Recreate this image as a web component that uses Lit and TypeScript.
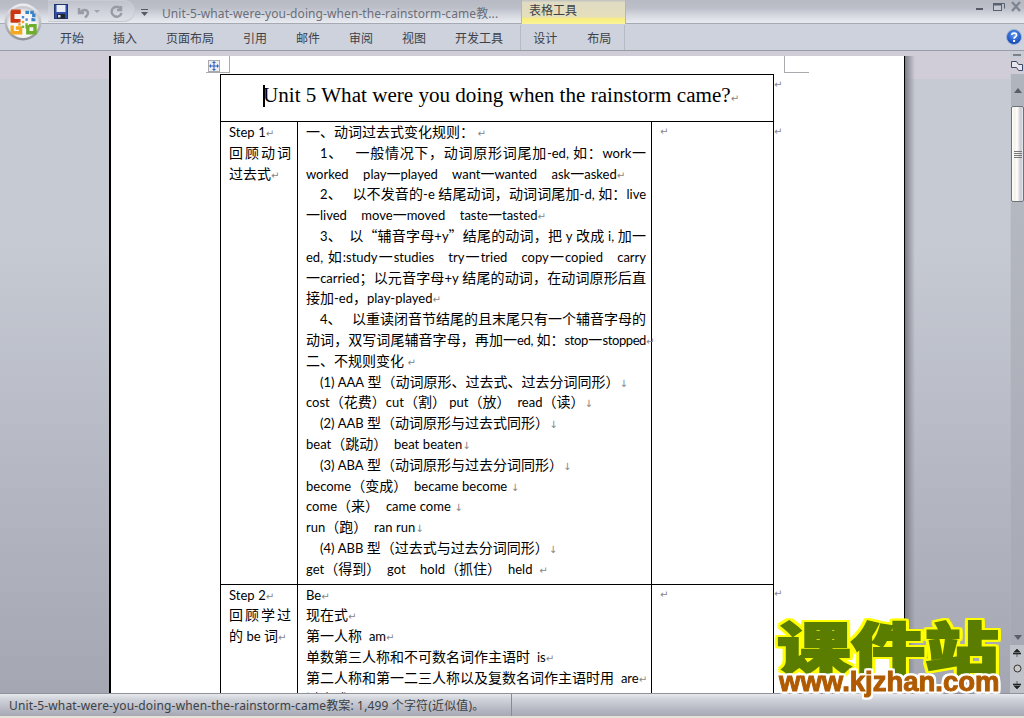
import { LitElement, html, css, svg } from "lit";
import { customElement } from "lit/decorators.js";

type Line = { t: string; j?: boolean; i?: boolean; h?: boolean; k?: boolean };

const col1a: Line[] = [{ t: "Step 1↵" }, { t: "回顾动词", j: true }, { t: "过去式↵" }];
const col1b: Line[] = [{ t: "Step 2↵" }, { t: "回顾学过", j: true }, { t: "的 be 词↵" }];

const body1: Line[] = [
  { t: "一、动词过去式变化规则： ↵" },
  { t: "1、   一般情况下，动词原形词尾加-ed, 如：work一", j: true, i: true },
  { t: "worked    play一played    want一wanted    ask一asked↵" },
  { t: "2、   以不发音的-e 结尾动词，动词词尾加-d, 如：live", j: true, i: true },
  { t: "一lived    move一moved    taste一tasted↵" },
  { t: "3、  以“辅音字母+y”结尾的动词，把 y 改成 i, 加一", j: true, i: true },
  { t: "ed, 如:study一studies   try一tried   copy一copied   carry", j: true },
  { t: "一carried；以元音字母+y 结尾的动词，在动词原形后直", j: true },
  { t: "接加-ed，play-played↵" },
  { t: "4、   以重读闭音节结尾的且末尾只有一个辅音字母的", j: true, i: true },
  { t: "动词，双写词尾辅音字母，再加一ed, 如：stop一stopped↵", j: true, h: true, k: true },
  { t: "二、不规则变化 ↵" },
  { t: "(1) AAA 型（动词原形、过去式、过去分词同形）↓", i: true },
  { t: "cost（花费）cut（割） put（放）  read（读）↓" },
  { t: "(2) AAB 型（动词原形与过去式同形）↓", i: true },
  { t: "beat（跳动）  beat beaten↓" },
  { t: "(3) ABA 型（动词原形与过去分词同形）↓", i: true },
  { t: "become（变成）  became become ↓" },
  { t: "come（来）  came come ↓" },
  { t: "run（跑）  ran run↓" },
  { t: "(4) ABB 型（过去式与过去分词同形）↓", i: true },
  { t: "get（得到）  got    hold（抓住）  held  ↵" },
];

const body2: Line[] = [
  { t: "Be↵" },
  { t: "现在式↵" },
  { t: "第一人称  am↵" },
  { t: "单数第三人称和不可数名词作主语时  is↵" },
  { t: "第二人称和第一二三人称以及复数名词作主语时用  are↵", h: true },
  { t: "过去式↵" },
];

const tabs = ["开始", "插入", "页面布局", "引用", "邮件", "审阅", "视图", "开发工具"];

function rich(s: string) {
  const parts = s.match(/[\x21-\x7e]+(?: +[\x21-\x7e]+)*|[↵↓]|[^\x21-\x7e↵↓]+/g) || [];
  return parts.map((p) => {
    if (p === "↵" || p === "↓") return html`<span class="pm">${p}</span>`;
    if (/^[\x21-\x7e]/.test(p)) return html`<span class="lat">${p}</span>`;
    return p;
  });
}

function lines(ls: Line[]) {
  return ls.map(
    (l) => html`<div class="ln ${l.j ? "j" : ""} ${l.i ? "ind" : ""} ${l.h ? "hang" : ""} ${l.k ? "tight" : ""}">${rich(l.t)}</div>`
  );
}

const orb = svg`
  <defs>
    <radialGradient id="ob" cx="50%" cy="60%" r="55%">
      <stop offset="0" stop-color="#ffffff"/><stop offset="0.75" stop-color="#f2f2f2"/><stop offset="1" stop-color="#c9cbd0"/>
    </radialGradient>
    <linearGradient id="ring" x1="0" y1="0" x2="0" y2="1">
      <stop offset="0" stop-color="#eef0f4"/><stop offset="1" stop-color="#8d9097"/>
    </linearGradient>
  </defs>
  <circle cx="20" cy="20" r="18.5" fill="url(#ring)"/>
  <circle cx="20" cy="20" r="16" fill="url(#ob)"/>
  <g transform="translate(20 20) scale(1.2) translate(-20 -20)">
    <g fill="none" stroke-width="2.8">
      <path d="M18 11H11.5v8H18" stroke="#d2421c"/>
      <path d="M18 12H11v7h5" stroke="#c9360f"/>
      <path d="M22 12h7v6h-3" stroke="#3a82c8" stroke-dasharray="3 1"/>
      <path d="M11 23v6h7v-4h-4" stroke="#f4a81c"/>
      <path d="M22 24h2v5h6v-6h-5" stroke="#6fae2c"/>
    </g>
    <g fill="#e8a030"><rect x="19" y="19" width="2" height="2"/><rect x="16" y="21" width="2" height="2"/></g>
    <g fill="#4a8cd0"><rect x="22" y="17" width="2" height="2"/><rect x="19" y="15" width="2" height="2"/></g>
    <g fill="#7ab83a"><rect x="22" y="21" width="2" height="2"/><rect x="19" y="23" width="2" height="2"/></g>
  </g>
`;

@customElement("app-root")
export class AppRoot extends LitElement {
  static styles = css`
    :host { display: block; width: 1024px; height: 718px; position: relative; overflow: hidden;
      font-family: "Noto Sans", "Noto Sans CJK SC", sans-serif; background: #e6e4d8; }
    .win { display: flex; flex-direction: column; height: 716px; }

    .title { height: 24px; flex: none; display: flex; align-items: center; box-sizing: border-box;
      background: linear-gradient(#b7bac3 0, #bcbfc8 35%, #d8dae2 70%, #e9ebf1 100%);
      border-bottom: 1px solid #a6aab2; padding-left: 48px; position: relative; }
    .qat { width: 87px; height: 22px; flex: none; box-sizing: border-box; display: flex; align-items: center; gap: 0;
      padding: 2px 0 0 6px; border: 1px solid #c8cbd3; border-left: none; border-radius: 0 12px 12px 0;
      background: linear-gradient(#bfc2cb, #dde0e7); margin-top: -2px; }
    .qat svg { display: block; flex: none; }
    .cust { flex: none; margin: 2px 0 0 6px; display: block; }
    .doc-title { flex: none; width: 352px; margin-left: 14px; font-size: 12px; color: #6a6e78; white-space: nowrap;
      margin-top: 3px; letter-spacing: 0.09px; }
    .ctx-h { flex: none; width: 105px; height: 24px; box-sizing: border-box; margin-left: 7px; padding: 3px 0 0 7px;
      font-size: 12px; line-height: 15px; color: #3c3f46;
      background: linear-gradient(#bfc0c2 0, #dfdbc2 10%, #e6dfbc 70%, #f9ee7c 78%, #fbf49a 100%);
      border-left: 1px solid #b4b6bd; border-right: 1px solid #b4b6bd; }
    .ctl { margin-left: auto; display: flex; align-items: center; padding-right: 1px; margin-top: -9px; }
    .ctl svg { display: block; }

    .ribbon { height: 27px; flex: none; box-sizing: border-box; background: #ced2dc; border-bottom: 1px solid #989ca4;
      display: flex; align-items: center; padding: 1px 0 0 60px; gap: 29px; font-size: 12px; color: #3d4149; position: relative; }
    .ctx-tabs { display: flex; gap: 30px; padding: 0 13px 0 12px; height: 25px; align-items: center;
      border-left: 1px solid #b6bac3; border-right: 1px solid #b6bac3; margin-left: -12px; }
    .help { position: absolute; right: 2px; top: 5px; display: block; }

    .doc { flex: 1; min-height: 0; display: flex; }
    .canvas { flex: 1; min-width: 0; display: flex; flex-direction: column;
      background: linear-gradient(#d0cdd8 0, #d0cdd8 28px, #c6cad3 28px, #c6cad3 30%, #a4a7b2 100%); }
    .strip { height: 5px; flex: none; }
    .row { flex: 1; min-height: 0; display: flex; }
    .page { width: 796px; margin-left: 109px; box-sizing: border-box; flex: none; background: #fff; overflow: hidden;
      border-left: 2px solid #000; border-right: 1px solid #000; padding: 18px 0 0 109px; position: relative; }
    .shade { width: 10px; flex: none; background: linear-gradient(90deg, #7b7d85, rgba(150,152,160,0)); }

    table { border-collapse: collapse; table-layout: fixed; width: 570px; }
    td { border: 1px solid #000; vertical-align: top; padding: 0; }
    td.end { border: none; padding: 0; }
    .head { height: 47px; text-align: center; vertical-align: middle; font-family: "Liberation Serif", serif; font-size: 21.1px;
      color: #000; white-space: nowrap; padding: 0 0 5px 8px; box-sizing: border-box; }
    .caret { display: inline-block; width: 2px; height: 22px; background: #000; vertical-align: -5px; margin-right: -2px; }
    .cell1 { padding: 0 6px 5px 8px; box-sizing: border-box; }
    .cell2 { padding: 0 5px 5px 8px; box-sizing: border-box; }
    .ln { font-size: 14px; line-height: 20.8px; height: 20.8px; color: #000; white-space: pre-wrap; word-spacing: 0.3px;
      font-family: "Noto Sans CJK SC", sans-serif; }
    .ln:first-child { margin-top: -1px; }
    .ln.j { text-align: justify; text-align-last: justify; }
    .ln.ind { padding-left: 14px; }
    .ln.tight { letter-spacing: -0.4px; }
    .ln.hang .pm { display: inline-block; width: 0; letter-spacing: 0; }
    .lat { font-family: Lato, "Noto Sans CJK SC", sans-serif; font-size: 13px; }
    .pm { font-family: "DejaVu Sans", sans-serif; font-size: 10px; color: #858585; }
    .markcell { padding-left: 8px; }
    .mark { font-family: "DejaVu Sans", sans-serif; font-size: 10px; line-height: 20.8px; color: #858585; display: block; }

    .crop { position: absolute; border: 0 solid #a9a9ae; }
    .crop.l { left: 95px; top: 0; width: 23px; height: 16px; border-right-width: 1px; border-bottom-width: 1px; }
    .crop.r { left: 673px; top: 0; width: 24px; height: 16px; border-left-width: 1px; border-bottom-width: 1px; }
    .move { position: absolute; left: 97px; top: 4px; width: 12px; height: 12px; box-sizing: border-box; background: #eceef2;
      border: 1px solid #a9a9ae; display: flex; align-items: center; justify-content: center; }
    .move svg { display: block; }

    .sb { width: 14px; flex: none; display: flex; flex-direction: column; align-items: stretch;
      background: linear-gradient(#c8ccd4, #a8abb6); }
    .split { height: 7px; flex: none; display: flex; justify-content: center; align-items: center; }
    .split i { width: 8px; height: 2px; background: #7c8088; display: block; }
    .ruler { height: 16px; flex: none; background: #cfccd6; display: flex; align-items: center; justify-content: center; }
    .sbtn { height: 32px; flex: none; background: #b0b4bd; display: flex; align-items: center; justify-content: center; margin-left: 1px; }
    .tri-u { width: 0; height: 0; border: 4.5px solid transparent; border-top: none; border-bottom: 5px solid #5a5e68; }
    .tri-d { width: 0; height: 0; border: 4.5px solid transparent; border-bottom: none; border-top: 5px solid #5a5e68; }
    .thumb { height: 96px; flex: none; box-sizing: border-box; margin-left: 1px; border: 1px solid #6f7278; border-radius: 2px;
      background: linear-gradient(90deg, #fff 0, #f6f0e4 25%, #fff 45%, #c8cad0 80%, #e8e8ee 100%);
      display: flex; flex-direction: column; align-items: center; justify-content: center; gap: 1px; }
    .thumb i { width: 8px; height: 1px; background: #777; display: block; }
    .track { flex: 1; margin-left: 1px; background: linear-gradient(#b4b8c0, #a6a9b4); display: flex; flex-direction: column;
      justify-content: flex-end; align-items: center; padding-bottom: 5px; }
    .browse { height: 48px; flex: none; display: flex; flex-direction: column; align-items: center; justify-content: space-around;
      background: #c0c2ca; }
    .browse svg { display: block; }

    .status { height: 23px; flex: none; box-sizing: border-box; display: flex; align-items: center;
      background: linear-gradient(#e6e8ed 0, #cfd2d9 25%, #b0b3bd 80%, #a6a9b3 100%); border-top: 1px solid #8f929a;
      font-size: 12px; color: #3c3f46; white-space: nowrap; }
    .s1 { width: 512px; box-sizing: border-box; padding-left: 9px; border-right: 1px solid #888b93; height: 100%;
      display: flex; align-items: center; letter-spacing: 0.15px; }

    .wm { position: absolute; left: 768px; top: 617px; width: 246px; pointer-events: none; }
    .wm1 { font-family: "Noto Sans CJK SC", sans-serif; font-weight: 900; font-size: 56px; line-height: 56px; color: #5a7d00;
      -webkit-text-stroke: 2px #5a7d00; white-space: nowrap; margin-left: 9px; transform: scaleX(1.32); transform-origin: 0 50%;
      filter: drop-shadow(2px 0 0 #ff0) drop-shadow(-2px 0 0 #ff0) drop-shadow(0 2px 0 #ff0) drop-shadow(0 -2px 0 #ff0); }
    .wm2 { font-family: "Liberation Sans", sans-serif; font-weight: 700; font-size: 27.5px; line-height: 26px; color: #b05a00;
      -webkit-text-stroke: 1px #b05a00; white-space: nowrap; margin-top: -4px; padding-left: 11px;
      filter: drop-shadow(2px 0 0 #fff) drop-shadow(-2px 0 0 #fff) drop-shadow(0 2px 0 #fff) drop-shadow(0 -2px 0 #fff); }
    .orb { position: absolute; left: 3px; top: 2px; display: block; }
  `;

  render() {
    return html`
      <div class="win">
        <div class="title">
          <div class="qat">
            <svg width="14" height="15" viewBox="0 0 14 15">
              <rect x="0.5" y="0.5" width="13" height="14" fill="#2f4fa8" stroke="#22356f"/>
              <rect x="2.5" y="1" width="9" height="7" fill="#e8ecf6"/>
              <rect x="3" y="10" width="8" height="4.5" fill="#20242c"/>
              <rect x="4" y="11" width="2.5" height="2.5" fill="#d8dbe2"/>
            </svg>
            <svg style="margin-left:9px" width="14" height="14" viewBox="0 0 14 14" fill="none" stroke="#989ba4" stroke-width="2.4">
              <path d="M2 3v5h5"/><path d="M3 8c2-4 8-4 8 0 0 2-1 3-3 4.5"/>
            </svg>
            <svg style="margin-left:3px" width="6" height="4" viewBox="0 0 6 4"><path d="M0 0h6L3 3z" fill="#a0a3ac"/></svg>
            <svg style="margin-left:10px" width="13" height="14" viewBox="0 0 13 14" fill="none" stroke="#989ba4" stroke-width="2.4">
              <path d="M10.5 3.5A5 5 0 1 0 11.5 8"/><path d="M11 1v4H7"/>
            </svg>
          </div>
          <svg class="cust" width="7" height="7" viewBox="0 0 7 7"><path d="M0 0h7v1H0zM0 3h7L3.5 7z" fill="#555962"/></svg>
          <div class="doc-title">Unit-5-what-were-you-doing-when-the-rainstorm-came教...</div>
          <div class="ctx-h">表格工具</div>
          <div class="ctl">
            <svg width="47" height="12" viewBox="0 0 47 12" fill="none">
              <rect x="0" y="7" width="7" height="2" fill="#555a64"/>
              <path d="M21.5 2.5h7v5" stroke="#596070"/><rect x="17.5" y="2.5" width="8" height="7" stroke="#596070" fill="#c5c9d2"/>
              <rect x="17.5" y="2.5" width="8" height="2" fill="#596070"/>
              <path d="M36 1l8 9M44 1l-8 9" stroke="#7f8591" stroke-width="2.4"/>
            </svg>
          </div>
        </div>
        <div class="ribbon">
          ${tabs.map((t) => html`<span>${t}</span>`)}
          <div class="ctx-tabs"><span>设计</span><span>布局</span></div>
          <svg class="help" width="16" height="16" viewBox="0 0 16 16">
            <defs><radialGradient id="hb" cx="50%" cy="35%" r="65%"><stop offset="0" stop-color="#5f9bf0"/><stop offset="1" stop-color="#0f3fb0"/></radialGradient></defs>
            <circle cx="8" cy="8" r="7.5" fill="url(#hb)" stroke="#9fb4d8"/>
            <path d="M5.6 5.8C6 3.6 10.6 3.6 10.6 6c0 1.8-2.5 1.8-2.5 3.7" fill="none" stroke="#fff" stroke-width="1.7"/>
            <rect x="7.1" y="11" width="2" height="2" fill="#fff"/>
          </svg>
        </div>
        <div class="doc">
          <div class="canvas">
            <div class="strip"></div>
            <div class="row">
              <div class="page">
                <div class="crop l"></div>
                <div class="crop r"></div>
                <div class="move">
                  <svg width="10" height="10" viewBox="0 0 10 10" fill="#2a5fc4">
                    <path d="M4.5 1.5h1v7h-1zM1.5 4.5h7v1h-7zM5 0l2 2H3zM5 10L3 8h4zM0 5l2-2v4zM10 5L8 7V3z"/>
                  </svg>
                </div>
                <table>
                  <colgroup>
                    <col style="width:77px" /><col style="width:354px" /><col style="width:122px" /><col style="width:16px" />
                  </colgroup>
                  <tr>
                    <td class="head" colspan="3"><span class="caret"></span>Unit 5 What were you doing when the rainstorm came?<span class="pm">↵</span></td>
                    <td class="end"><span class="mark">↵</span></td>
                  </tr>
                  <tr>
                    <td class="cell1">${lines(col1a)}</td>
                    <td class="cell2">${lines(body1)}</td>
                    <td class="markcell"><span class="mark">↵</span></td>
                    <td class="end"><span class="mark">↵</span></td>
                  </tr>
                  <tr>
                    <td class="cell1">${lines(col1b)}</td>
                    <td class="cell2">${lines(body2)}</td>
                    <td class="markcell"><span class="mark">↵</span></td>
                    <td class="end"><span class="mark">↵</span></td>
                  </tr>
                </table>
              </div>
              <div class="shade"></div>
            </div>
          </div>
          <div class="sb">
            <div class="split"><i></i></div>
            <div class="ruler">
              <svg width="12" height="12" viewBox="0 0 12 12"><path d="M0.5 1.5h5l2 3h4v6h-4l-2-3h-5z" fill="#e8e4ec" stroke="#3c4a68"/></svg>
            </div>
            <div class="sbtn"><span class="tri-u"></span></div>
            <div class="thumb"><i></i><i></i><i></i><i></i></div>
            <div class="track"><span class="tri-d"></span></div>
            <div class="browse">
              <svg width="8" height="8" viewBox="0 0 8 8"><path d="M4 0l3 3H1zM0 4h8v1H0zM4 4v4" fill="#222" stroke="#222" stroke-width="0.6"/></svg>
              <svg width="9" height="9" viewBox="0 0 9 9"><circle cx="4.5" cy="4.5" r="3.5" fill="#c8c8c8" stroke="#333"/></svg>
              <svg width="8" height="8" viewBox="0 0 8 8"><path d="M4 8L1 5h6zM0 3h8v1H0zM4 0v4" fill="#222" stroke="#222" stroke-width="0.6"/></svg>
            </div>
          </div>
        </div>
        <div class="status">
          <div class="s1">Unit-5-what-were-you-doing-when-the-rainstorm-came教案: 1,499 个字符(近似值)。</div>
        </div>
      </div>
      <svg class="orb" width="40" height="40" viewBox="0 0 40 40">${orb}</svg>
      <div class="wm">
        <div class="wm1">课件站</div>
        <div class="wm2">www.kjzhan.com</div>
      </div>
    `;
  }
}
